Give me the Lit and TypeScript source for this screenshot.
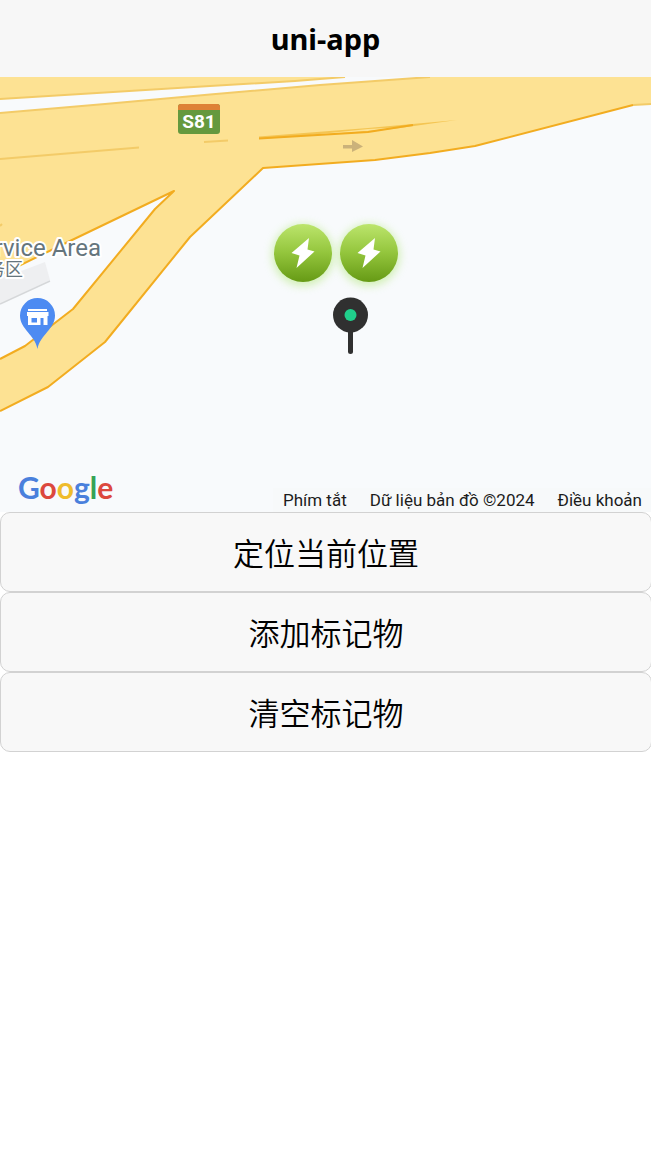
import { LitElement, html, svg, css } from "lit";
import { customElement, state } from "lit/decorators.js";

interface Marker {
  x: number;
  y: number;
}

const INITIAL_MARKERS: Marker[] = [
  { x: 303, y: 176 },
  { x: 369, y: 176 },
];

@customElement("map-view")
export class MapView extends LitElement {
  static properties = { markers: { attribute: false } };
  declare markers: Marker[];

  constructor() {
    super();
    this.markers = [];
  }

  static styles = css`
    :host {
      display: grid;
      background: #f8fafc;
      overflow: hidden;
    }
    .canvas,
    .footer {
      grid-area: 1 / 1;
    }
    .canvas {
      display: block;
      width: 100%;
      height: 435px;
    }
    .road {
      fill: #fde293;
    }
    .edge {
      fill: none;
      stroke: #f2ac20;
      stroke-width: 2;
      stroke-linejoin: round;
    }
    .soft {
      fill: none;
      stroke: #f3cb68;
      stroke-width: 2;
    }
    .place {
      font-family: Roboto, "Noto Sans CJK SC", sans-serif;
      fill: #65757d;
      stroke: #fff;
      stroke-width: 4;
      stroke-linejoin: round;
      paint-order: stroke;
    }
    .place-en {
      font-size: 24px;
    }
    .place-zh {
      font-size: 18px;
    }
    .shield {
      font: 700 19px Roboto, sans-serif;
      fill: #fff;
    }
    .footer {
      align-self: end;
      z-index: 1;
      display: flex;
      align-items: flex-end;
      justify-content: space-between;
      padding-left: 18px;
    }
    .logo {
      font: 700 30px/40px Lato, sans-serif;
      text-decoration: none;
      padding-bottom: 5px;
    }
    .blue {
      color: #4a80dc;
    }
    .red {
      color: #dc483e;
    }
    .yellow {
      color: #efbc2c;
    }
    .green {
      color: #35a355;
    }
    .terms {
      display: flex;
      gap: 23px;
      padding: 0 9px 0 10px;
      font: 400 17px/24px Roboto, sans-serif;
      background: #f7f9fa;
      color: #1c1c1c;
    }
    .terms a,
    .terms button {
      font: inherit;
      color: inherit;
      text-decoration: none;
      border: 0;
      padding: 0;
      background: none;
    }
  `;

  render() {
    return html`
      <svg class="canvas" viewBox="0 0 651 435" preserveAspectRatio="xMidYMid slice" role="img" aria-label="Map">
        <defs>
          <linearGradient id="lime" x1="0" y1="0" x2="0" y2="1">
            <stop offset="0" stop-color="#bce56c" />
            <stop offset="0.5" stop-color="#93c53c" />
            <stop offset="1" stop-color="#669a15" />
          </linearGradient>
          <filter id="glow" x="-50%" y="-50%" width="200%" height="200%">
            <feGaussianBlur stdDeviation="4" />
          </filter>
        </defs>
        <path d="M0 202 45 185 50 203 0 227Z" fill="#eeeff1" />
        <path d="M50 204 0 227" fill="none" stroke="#d5d7d9" stroke-width="1.5" />
        <path class="road" d="M0 0H345L295 4 210 9 0 22Z" />
        <path class="soft" d="M345 0 295 4 210 9 0 22" />
        <path
          class="road"
          d="M0 36 105 27 210 17.500 320 8 430 0H651V27L633 28 475 69 430 76 375 83 263 91 190 160 105 265 48 310 0 334V282L25 269 73 232 155 132 174 114 70 164 0 198Z"
        />
        <path class="soft" d="M0 36 105 27 210 17.500 320 8 430 0M0 82 139 70.500M204 65 228 63.500M0 149 2 147M633 28 651 27" />
        <path class="edge" d="M633 28 475 69 430 76 375 83 263 91 190 160 105 265 48 310 0 334" />
        <path class="edge" d="M0 282 25 269 73 232 155 132 174 114 70 164 0 198" />
        <path d="M259 59.500 368 51 457 43 428 47 400 51 368 55 259 62Z" fill="#f4c553" />
        <path d="M300 59 368 54 404 50 368 52Z" fill="#fde293" />
        <path class="edge" d="M259 61.500 368 55 413 48" />
        <path d="M343 68H352V63L363 69.500 352 75V71.500H343Z" fill="#cbb27a" />

        <rect x="178" y="27" width="42" height="30" rx="3" fill="#65993e" />
        <path d="M178 33V30a3 3 0 0 1 3-3h36a3 3 0 0 1 3 3v3Z" fill="#de8136" />
        <text class="shield" x="199" y="51" text-anchor="middle">S81</text>

        <text class="place place-zh" x="23" y="199" text-anchor="end">服务区</text>
        <text class="place place-en" x="101" y="179" text-anchor="end">Service Area</text>

        <path d="M37.500 272C35 258 20 252 20 238.500a17.500 17.500 0 0 1 35 0C55 252 40 258 37.500 272Z" fill="#4d8bf2" />
        <path
          d="M28 232H47V234H28ZM27 235H48.500V239H47.500V248H43.500V241H40.500V248H28V239H27ZM31.500 241V245.500H37V241Z"
          fill="#fff"
          fill-rule="evenodd"
        />

        ${this.markers.map(
          (m) => svg`<g transform="translate(${m.x} ${m.y})">
            <circle r="31" cy="2" fill="#b8e986" opacity="0.6" filter="url(#glow)" />
            <circle r="29" fill="url(#lime)" />
            <path d="M6-15-11.500 0-3.500 2.500-6.500 15 11.500-1.500 4.500-3.500Z" fill="#fff" />
          </g>`
        )}

        <path d="M350.500 255V274.500" stroke="#303030" stroke-width="5" stroke-linecap="round" />
        <circle cx="350.500" cy="238" r="17.500" fill="#303030" />
        <circle cx="350.500" cy="238" r="6" fill="#20cf8b" />
      </svg>
      <div class="footer">
        <a class="logo" href="#" aria-label="Google"
          ><span class="blue">G</span><span class="red">o</span><span class="yellow">o</span
          ><span class="blue">g</span><span class="green">l</span><span class="red">e</span></a
        >
        <div class="terms">
          <button type="button">Phím tắt</button>
          <span>Dữ liệu bản đồ ©2024</span>
          <a href="#">Điều khoản</a>
        </div>
      </div>
    `;
  }
}

@customElement("app-root")
export class AppRoot extends LitElement {
  @state() private markers: Marker[] = INITIAL_MARKERS;

  static styles = css`
    :host {
      display: block;
      min-height: 100vh;
      background: #fff;
      color: #000;
    }
    .bar {
      display: flex;
      align-items: center;
      justify-content: center;
      height: 77px;
      background: #f7f7f7;
    }
    .title {
      margin: 0;
      font: 700 29px/40px "Noto Sans", sans-serif;
    }
    .page {
      overflow: hidden;
    }
    .actions {
      display: flex;
      flex-direction: column;
      margin-right: -1px;
    }
    .action {
      padding: 0;
      border: 1px solid #d2d2d2;
      border-radius: 10px;
      background: #f8f8f8;
      color: #000;
      font: 350 31px/78px "Noto Sans CJK SC", sans-serif;
    }
  `;

  private locate = () => {
    this.requestUpdate();
  };

  private add = () => {
    const n = this.markers.length;
    this.markers = [...this.markers, { x: 303 + (n % 5) * 66, y: 176 }];
  };

  private clear = () => {
    this.markers = [];
  };

  render() {
    return html`
      <header class="bar"><h1 class="title">uni-app</h1></header>
      <main class="page">
        <map-view .markers=${this.markers}></map-view>
        <div class="actions">
          <button class="action" type="button" @click=${this.locate}>定位当前位置</button>
          <button class="action" type="button" @click=${this.add}>添加标记物</button>
          <button class="action" type="button" @click=${this.clear}>清空标记物</button>
        </div>
      </main>
    `;
  }
}
